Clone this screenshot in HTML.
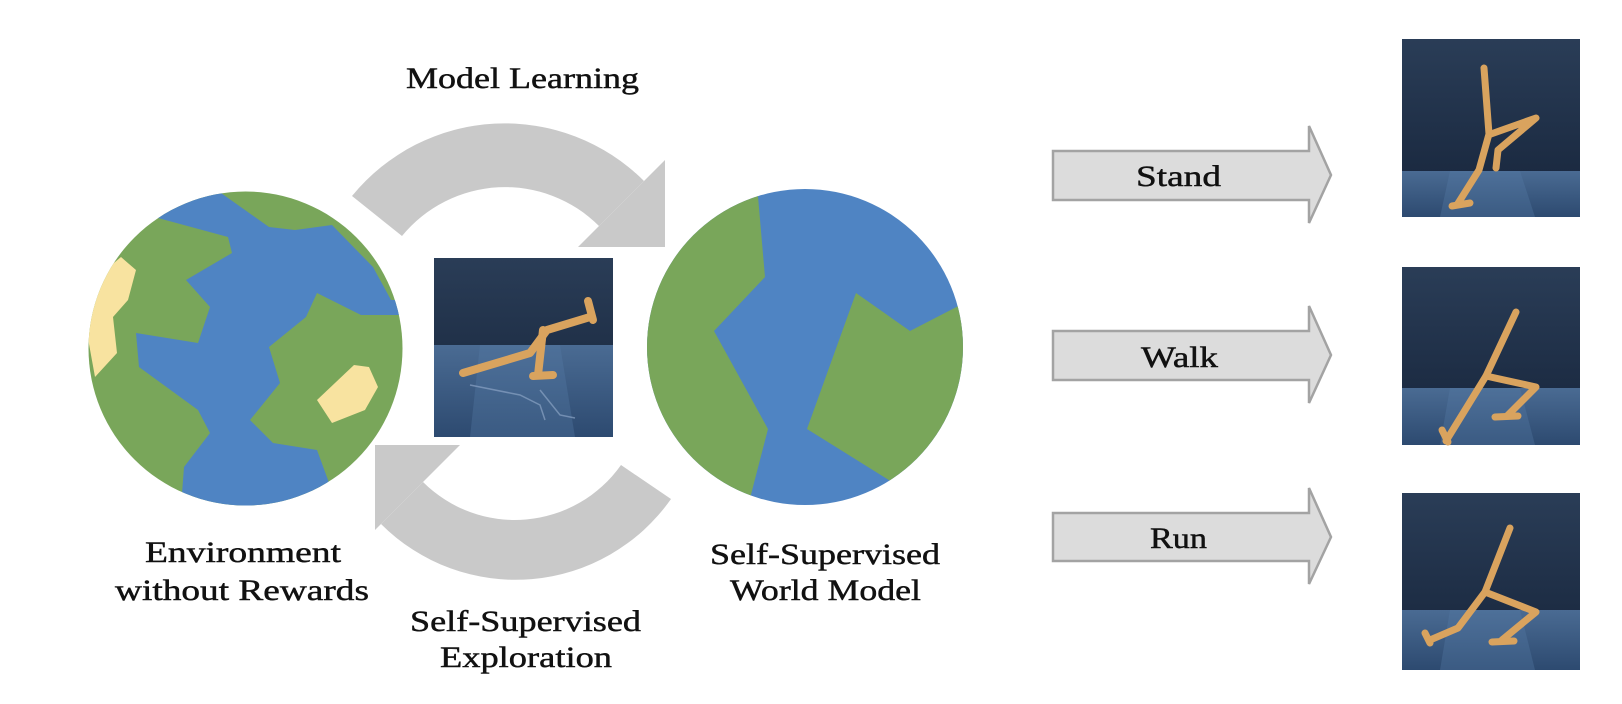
<!DOCTYPE html>
<html><head><meta charset="utf-8"><style>
html,body{margin:0;padding:0;background:#fff;}
svg{display:block}
text{font-family:"Liberation Serif",serif;fill:#111;stroke:#111;stroke-width:0.45;}
</style></head><body>
<svg width="1622" height="704" viewBox="0 0 1622 704" xmlns="http://www.w3.org/2000/svg">
<defs>
<clipPath id="g1"><circle cx="245.5" cy="348.5" r="157"/></clipPath>
<clipPath id="g2"><circle cx="805" cy="347" r="158"/></clipPath>
<linearGradient id="sky" x1="0" y1="0" x2="0" y2="1">
<stop offset="0" stop-color="#2a3d57"/><stop offset="1" stop-color="#16243a"/></linearGradient>
<linearGradient id="floor" x1="0" y1="0" x2="0" y2="1">
<stop offset="0" stop-color="#4a6b93"/><stop offset="1" stop-color="#2d4a70"/></linearGradient>
</defs>

<g fill="#c9c9c9">
<path d="M352,196 A197,197 0 0 1 644,181 L599,226 A133,133 0 0 0 402,236 Z"/>
<polygon points="578,247 665,247 665,160"/>
<path d="M671,499 A190,190 0 0 1 381,524 L423,482 A130,130 0 0 0 621,465 Z"/>
<polygon points="375,445 460,445 375,530"/>
</g>

<g clip-path="url(#g1)">
<rect x="80" y="180" width="340" height="340" fill="#79a65a"/>
<polygon fill="#4f84c3" points="80,180 160,180 221,193 269,227 295,230 332,225 373,267 391,300 420,300 420,315 361,315 317,293 306,317 269,347 280,383 250,420 273,443 317,450 328,480 340,520 180,520 184,467 210,433 198,410 139,367 136,333 198,343 210,307 186,280 232,253 228,237 158,218 80,218"/>
<polygon fill="#f8e3a0" points="121,257 136,270 128,300 113,317 117,353 95,377 87,333 80,300 102,273"/>
<polygon fill="#f8e3a0" points="317,400 354,365 369,367 378,387 365,410 332,423"/>
</g>

<g clip-path="url(#g2)">
<rect x="640" y="185" width="330" height="330" fill="#4f84c3"/>
<polygon fill="#79a65a" points="640,185 757,185 765,277 714,331 768,429 747,510 640,510"/>
<polygon fill="#79a65a" points="856,293 910,331 970,300 970,510 900,510 892,482 807,429"/>
</g>

<g>
<rect x="434" y="258" width="179" height="179" fill="url(#sky)"/>
<rect x="434" y="345" width="179" height="92" fill="url(#floor)"/>
<polygon points="480,345 560,345 575,437 470,437" fill="#557aa5" opacity="0.35"/>
<g stroke="#d9a35e" stroke-width="8" stroke-linecap="round" fill="none" stroke-linejoin="round">
<polyline points="463,373 530,353 547,330 590,317"/>
<line x1="588" y1="301" x2="593" y2="320"/>
<polyline points="543,330 538,375"/>
<line x1="533" y1="376" x2="553" y2="375"/>
</g>
<g stroke="#8aa3c4" stroke-width="1.5" fill="none" opacity="0.7">
<polyline points="470,385 520,395 540,405 545,420"/><polyline points="540,390 560,415 575,418"/>
</g>
</g>

<g>
<rect x="1402" y="39" width="178" height="178" fill="url(#sky)"/>
<rect x="1402" y="171" width="178" height="46" fill="url(#floor)"/>
<polygon points="1450,171 1520,171 1535,217 1440,217" fill="#557aa5" opacity="0.35"/>
<g stroke="#d9a35e" stroke-width="7" stroke-linecap="round" fill="none" stroke-linejoin="round">
<polyline points="1484,68 1489,134 1479,170 1457,205"/>
<line x1="1452" y1="206" x2="1470" y2="203"/>
<polyline points="1491,134 1536,118 1498,150 1496,168"/>
</g>
<rect x="1402" y="267" width="178" height="178" fill="url(#sky)"/>
<rect x="1402" y="388" width="178" height="57" fill="url(#floor)"/>
<polygon points="1450,388 1520,388 1535,445 1440,445" fill="#557aa5" opacity="0.35"/>
<g stroke="#d9a35e" stroke-width="7" stroke-linecap="round" fill="none" stroke-linejoin="round">
<polyline points="1516,312 1486,376 1446,441"/>
<line x1="1442" y1="430" x2="1448" y2="442"/>
<polyline points="1486,376 1536,387 1507,416"/>
<line x1="1495" y1="417" x2="1518" y2="416"/>
</g>
<rect x="1402" y="493" width="178" height="177" fill="url(#sky)"/>
<rect x="1402" y="610" width="178" height="60" fill="url(#floor)"/>
<polygon points="1450,610 1520,610 1535,670 1440,670" fill="#557aa5" opacity="0.35"/>
<g stroke="#d9a35e" stroke-width="7" stroke-linecap="round" fill="none" stroke-linejoin="round">
<polyline points="1510,528 1485,592 1458,628 1430,640"/>
<line x1="1425" y1="633" x2="1430" y2="643"/>
<polyline points="1485,592 1536,612 1502,640"/>
<line x1="1492" y1="642" x2="1514" y2="641"/>
</g>
</g>

<g fill="#dcdcdc" stroke="#a3a3a3" stroke-width="2.5">
<polygon points="1053,151 1309,151 1309,126 1331,175 1309,223 1309,200 1053,200"/>
<polygon points="1053,331 1309,331 1309,306 1331,355 1309,403 1309,380 1053,380"/>
<polygon points="1053,513 1309,513 1309,488 1331,537 1309,584 1309,561 1053,561"/>
</g>

<g font-size="30">
<text x="406" y="88" textLength="233" lengthAdjust="spacingAndGlyphs">Model Learning</text>
<text x="145" y="562" textLength="196" lengthAdjust="spacingAndGlyphs">Environment</text>
<text x="115" y="600" textLength="254" lengthAdjust="spacingAndGlyphs">without Rewards</text>
<text x="410" y="631" textLength="231" lengthAdjust="spacingAndGlyphs">Self-Supervised</text>
<text x="440" y="667" textLength="172" lengthAdjust="spacingAndGlyphs">Exploration</text>
<text x="710" y="564" textLength="230" lengthAdjust="spacingAndGlyphs">Self-Supervised</text>
<text x="730" y="600" textLength="191" lengthAdjust="spacingAndGlyphs">World Model</text>
<text x="1136" y="186" textLength="85" lengthAdjust="spacingAndGlyphs">Stand</text>
<text x="1141" y="367" textLength="77" lengthAdjust="spacingAndGlyphs">Walk</text>
<text x="1150" y="548" textLength="57" lengthAdjust="spacingAndGlyphs">Run</text>
</g>
</svg>
</body></html>
